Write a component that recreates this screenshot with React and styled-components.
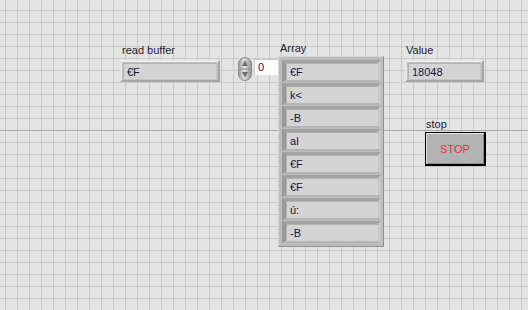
import styled, { createGlobalStyle } from "styled-components";

const GlobalStyle = createGlobalStyle`
  html, body { margin: 0; padding: 0; }
  body {
    width: 528px;
    height: 310px;
    overflow: hidden;
    font-family: "Liberation Sans", Arial, sans-serif;
  }
`;

const Panel = styled.div`
  position: relative;
  width: 528px;
  height: 310px;
  background-color: #e3e3e3;
  background-image:
    linear-gradient(#a9a9a9, #a9a9a9),
    linear-gradient(to right, #c9c9c9 1px, transparent 1px),
    linear-gradient(to bottom, #c9c9c9 1px, transparent 1px);
  background-size: 100% 1px, 12px 12px, 12px 12px;
  background-position: 0 130px, 5px 0, 0 10px;
  background-repeat: no-repeat, repeat, repeat;
`;

// each front-panel object sits at its own spot on the canvas
const Item = styled.div`
  position: absolute;
  left: ${(p) => p.$x}px;
  top: ${(p) => p.$y}px;
  display: flex;
  flex-direction: column;
  gap: ${(p) => p.$gap || 3}px;
`;

const Label = styled.div`
  font-size: 11px;
  line-height: 13px;
  color: #1c1c30;
  padding-left: ${(p) => p.$indent || 0}px;
`;

const Frame = styled.div`
  box-sizing: border-box;
  width: ${(p) => p.$w}px;
  height: ${(p) => p.$h || 22}px;
  background: #c3c3c3;
  border-top: 2px solid #ececec;
  border-left: 2px solid #e6e6e6;
  border-right: 2px solid #a6a6a6;
  border-bottom: 2px solid #a6a6a6;
  padding: 1px 2px 1px 1px;
  display: flex;
`;

const Field = styled.div`
  flex: 1;
  background: #d4d4d4;
  border-top: 1px solid #b2b2b2;
  border-left: 1px solid #b2b2b2;
  display: flex;
  align-items: center;
  padding-left: 3px;
  font-size: 11px;
  color: ${(p) => p.$color || "#14143a"};
`;

const Row = styled.div`
  display: flex;
  align-items: flex-start;
  gap: 2px;
`;

const IndexBox = styled.div`
  box-sizing: border-box;
  width: 24px;
  height: 16px;
  margin-top: 2px;
  background: #fcfcfc;
  border-top: 1px solid #c8c8c8;
  border-left: 1px solid #c8c8c8;
  font-size: 11px;
  line-height: 14px;
  padding-left: 3px;
  color: #1a1a60;
`;

const ArrayFrame = styled.div`
  box-sizing: border-box;
  width: 106px;
  padding: 3px 2px 3px 3px;
  background: #bdbdbd;
  border-top: 1px solid #d6d6d6;
  border-left: 1px solid #d6d6d6;
  border-right: 1px solid #8e8e8e;
  border-bottom: 1px solid #8e8e8e;
  display: flex;
  flex-direction: column;
  gap: 1px;
`;

const Element = styled.div`
  box-sizing: border-box;
  height: 22px;
  background: #a9a9a9;
  border-top: 3px solid #a3a3a3;
  border-left: 4px solid #9a9a9a;
  border-right: 3px solid #c7c7c7;
  border-bottom: 2px solid #b4b4b4;
  display: flex;
`;

const StopButton = styled.button`
  box-sizing: border-box;
  width: 61px;
  height: 34px;
  margin-left: -1px;
  background: #b3b3b3;
  border: 1px solid #000;
  border-right-width: 2px;
  border-bottom-width: 2px;
  box-shadow: inset 1px 1px 0 #e6e6e6, inset -1px -1px 0 #8a8a8a;
  font-family: "Liberation Sans", Arial, sans-serif;
  font-size: 11px;
  color: #ff1c4c;
  padding: 0;
  cursor: pointer;
`;

function Spinner() {
  return (
    <svg width="14" height="24" viewBox="0 0 14 24">
      <defs>
        <linearGradient id="sp" x1="0" x2="1" y1="0" y2="0">
          <stop offset="0" stopColor="#9a9a9a" />
          <stop offset="0.45" stopColor="#e2e2e2" />
          <stop offset="1" stopColor="#8c8c8c" />
        </linearGradient>
      </defs>
      <rect x="0.5" y="0.5" width="13" height="23" rx="6.5" fill="url(#sp)" stroke="#8a8a8a" />
      <line x1="1.5" y1="12" x2="12.5" y2="12" stroke="#8a8a8a" />
      <path d="M7 3.5 L10 9 L4 9 Z" fill="#6e6e6e" />
      <path d="M7 20.5 L10 15 L4 15 Z" fill="#6e6e6e" />
    </svg>
  );
}

const items = ["€F", "k<", "-B", "aI", "€F", "€F", "ú:", "-B"];

export default function App() {
  return (
    <Panel>
      <GlobalStyle />
      <Item $x={122} $y={44}>
        <Label>read buffer</Label>
        <div style={{ marginLeft: -2 }}>
          <Frame $w={100}>
            <Field>€F</Field>
          </Frame>
        </div>
      </Item>

      <Item $x={238} $y={57}>
        <Row>
          <Spinner />
          <IndexBox>0</IndexBox>
        </Row>
      </Item>

      <Item $x={278} $y={42} $gap={1}>
        <Label $indent={2}>Array</Label>
        <ArrayFrame>
          {items.map((t, i) => (
            <Element key={i}>
              <Field>{t}</Field>
            </Element>
          ))}
        </ArrayFrame>
      </Item>

      <Item $x={406} $y={44}>
        <Label>Value</Label>
        <div style={{ marginLeft: -1 }}>
          <Frame $w={79}>
            <Field>18048</Field>
          </Frame>
        </div>
      </Item>

      <Item $x={426} $y={118} $gap={1}>
        <Label>stop</Label>
        <StopButton>STOP</StopButton>
      </Item>
    </Panel>
  );
}
